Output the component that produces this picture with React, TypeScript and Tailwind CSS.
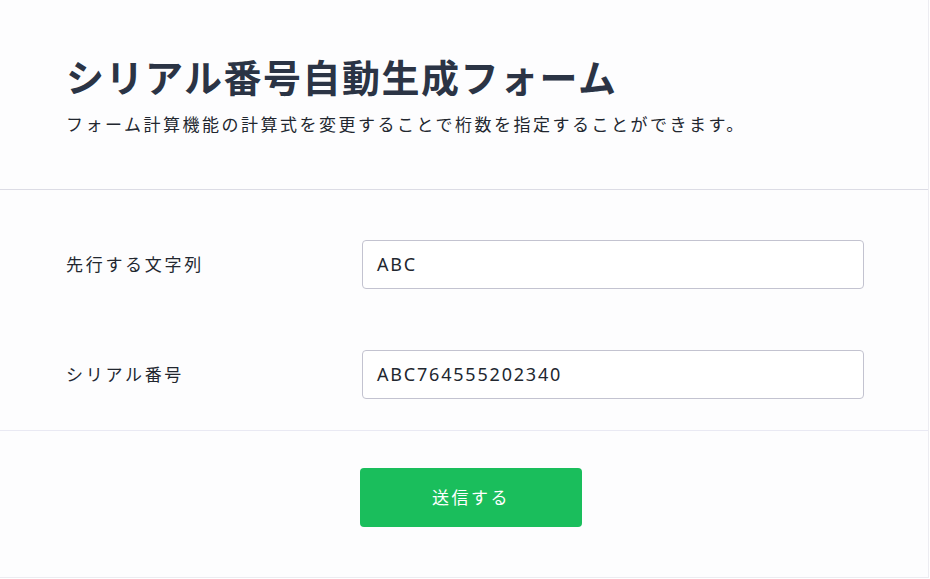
import React from "react";

const font = { fontFamily: '"Noto Sans", "Noto Sans CJK JP", sans-serif' };

export default function App() {
  return (
    <div className="w-[930px] h-[579px] bg-white" style={font}>
      <div className="w-[929px] h-[578px] bg-[#fdfdfe] border-r border-b border-[#ececf1] flex flex-col">
        <div className="h-[190px] border-b border-[#dcdce5] px-[66px] pt-[50px]">
          <h1 className="text-[38px] leading-[54px] font-bold tracking-[1.5px] text-[#2b3445]">
            シリアル番号自動生成フォーム
          </h1>
          <p className="mt-[8px] text-[17px] leading-[26px] tracking-[2.5px] text-[#22272f]">
            フォーム計算機能の計算式を変更することで桁数を指定することができます。
          </p>
        </div>
        <div className="flex flex-col gap-[61px] pt-[50px] pb-[31px] pl-[66px] pr-[64px] border-b border-[#e9e9f3]">
          <div className="flex items-center">
            <label className="w-[296px] text-[17px] tracking-[2.7px] text-[#22272f]">先行する文字列</label>
            <div className="flex-1 h-[49px] rounded-[4px] border border-[#c3c3d0] bg-white flex items-center px-[14px] text-[18px] tracking-[1.8px] text-[#22272f]">
              ABC
            </div>
          </div>
          <div className="flex items-center">
            <label className="w-[296px] text-[17px] tracking-[2.7px] text-[#22272f]">シリアル番号</label>
            <div className="flex-1 h-[49px] rounded-[4px] border border-[#c3c3d0] bg-white flex items-center px-[14px] text-[18px] tracking-[1.8px] text-[#22272f]">
              ABC764555202340
            </div>
          </div>
        </div>
        <div className="flex justify-center pl-[14px] pt-[37px]">
          <button className="w-[222px] h-[59px] rounded-[4px] bg-[#1abe5c] text-white text-[17px] tracking-[2.5px]">
            送信する
          </button>
        </div>
      </div>
    </div>
  );
}
